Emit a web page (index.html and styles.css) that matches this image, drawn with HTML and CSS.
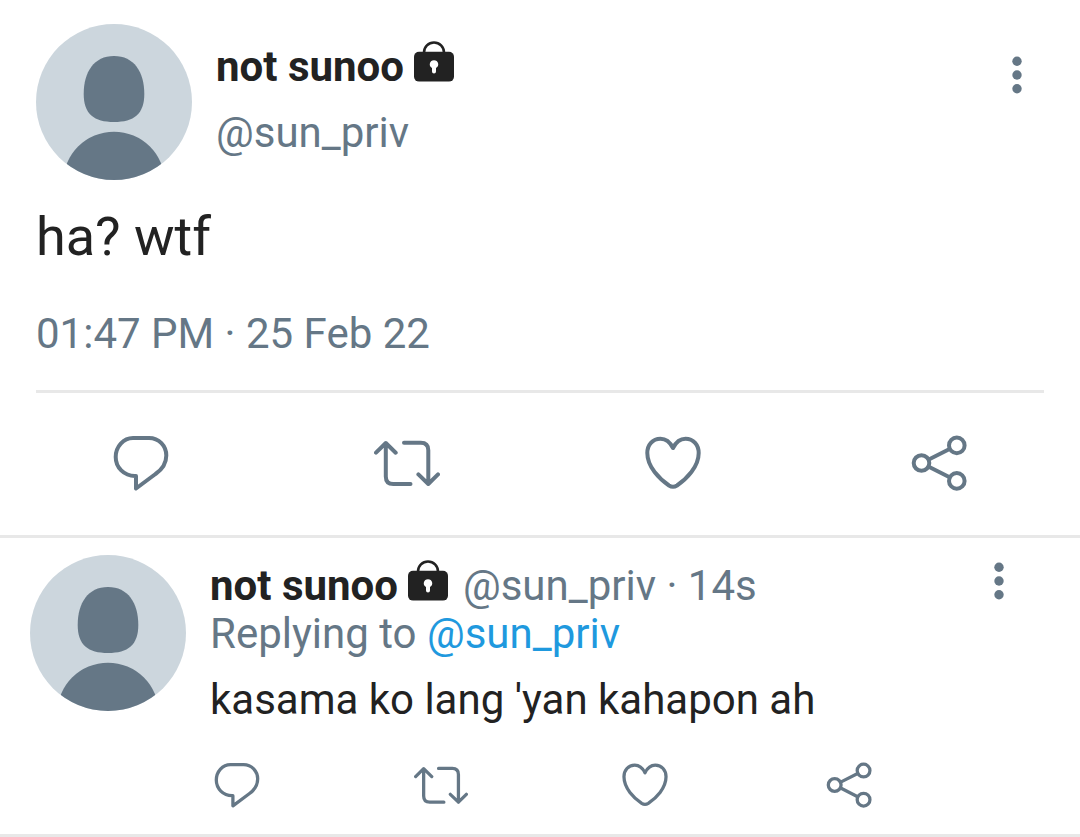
FILE: index.html
```html
<!DOCTYPE html>
<html lang="en">
<head>
  <meta charset="UTF-8" />
  <meta name="viewport" content="width=device-width, initial-scale=1" />
  <title>Tweet</title>
  <link rel="stylesheet" href="styles.css">
</head>
<body>
  <!-- Shared icons -->
  <svg class="sprite" aria-hidden="true">
    <symbol id="avatar" viewBox="0 0 156 156">
      <clipPath id="avatarClip"><circle cx="78" cy="78" r="78" /></clipPath>
      <g clip-path="url(#avatarClip)">
        <rect width="156" height="156" fill="#ccd6dd" />
        <path fill="#657786" d="M78 32C98 32 108.3 48 108.3 70C108.3 90 98 98 78 98C58 98 47.7 90 47.7 70C47.7 48 58 32 78 32Z" />
        <circle cx="78" cy="158.5" r="50.8" fill="#657786" />
      </g>
    </symbol>
    <symbol id="lock" viewBox="0 0 40 42">
      <path fill="none" stroke="#222" stroke-width="2.6" d="M10 13V11.5a10 10 0 0 1 20 0V13" />
      <rect y="10.8" width="40" height="29.8" rx="5" fill="#222" />
      <path fill="#fff" d="M20 19.2a4.2 4.2 0 0 1 2 7.9V30.5a2 2 0 0 1-4 0V27.1a4.2 4.2 0 0 1 2-7.9Z" />
    </symbol>
    <symbol id="reply" viewBox="0 0 66 66">
      <path d="M25 8H41C51 8 58.3 16 58.3 25.5C58.3 33 54 39.5 47.5 44L28 58.5V46H27C16 46 7.7 37.5 7.7 27C7.7 16.5 15.5 8 25 8Z" />
    </symbol>
    <symbol id="retweet" viewBox="0 0 66 66">
      <path d="M2 22.7L11.8 13L21.7 22.7M11.8 13V46.5Q11.8 54 19.3 54H36.5M30 12.8H46.8Q54.3 12.8 54.3 20.3V54M44.4 44.4L54.3 54L64 44.4" />
    </symbol>
    <symbol id="like" viewBox="0 0 66 66">
      <path d="M33 18C30 12 25.5 8.7 20.5 8.7C12.5 8.7 7.3 15 7.3 23C7.3 37 19.5 49 29 55.5Q33 58 37 55.5C46.5 49 58.7 37 58.7 23C58.7 15 53.5 8.7 45.5 8.7C40.5 8.7 36 12 33 18Z" />
    </symbol>
    <symbol id="share" viewBox="0 0 66 66">
      <path d="M22.8 29.5L43.6 19M22.8 36.7L43.6 47.3" />
      <circle cx="15.5" cy="33" r="7.8" />
      <circle cx="50.8" cy="15.4" r="7.8" />
      <circle cx="50.8" cy="50.9" r="7.8" />
    </symbol>
    <symbol id="more" viewBox="0 0 10 38">
      <circle cx="5" cy="5.3" r="4.7" />
      <circle cx="5" cy="19" r="4.7" />
      <circle cx="5" cy="32.7" r="4.7" />
    </symbol>
  </svg>

  <main>
    <article class="tweet">
      <header class="tweet-header">
        <svg class="avatar" role="img" aria-label="Profile picture"><use href="#avatar" /></svg>
        <div class="author">
          <div class="name-row">
            <strong class="name">not sunoo</strong>
            <svg class="lock" role="img" aria-label="Locked"><use href="#lock" /></svg>
          </div>
          <a class="handle" href="#">@sun_priv</a>
        </div>
        <button class="more" type="button" aria-label="More"><svg><use href="#more" /></svg></button>
      </header>
      <p class="tweet-text">ha? wtf</p>
      <time class="date" datetime="2022-02-25T13:47">01:47 PM · 25 Feb 22</time>
    </article>

    <div class="actions actions-main">
      <button type="button" aria-label="Reply"><svg><use href="#reply" /></svg></button>
      <button type="button" aria-label="Retweet"><svg><use href="#retweet" /></svg></button>
      <button type="button" aria-label="Like"><svg><use href="#like" /></svg></button>
      <button type="button" aria-label="Share"><svg><use href="#share" /></svg></button>
    </div>

    <article class="reply">
      <svg class="avatar" role="img" aria-label="Profile picture"><use href="#avatar" /></svg>
      <div class="reply-body">
        <div class="reply-header">
          <div class="name-row">
            <strong class="name">not sunoo</strong>
            <svg class="lock" role="img" aria-label="Locked"><use href="#lock" /></svg>
            <span class="meta"><a class="handle" href="#">@sun_priv</a> · <time>14s</time></span>
          </div>
          <button class="more" type="button" aria-label="More"><svg><use href="#more" /></svg></button>
        </div>
        <p class="replying">Replying to <a class="mention" href="#">@sun_priv</a></p>
        <p class="reply-text">kasama ko lang 'yan kahapon ah</p>
        <div class="actions actions-reply">
          <button type="button" aria-label="Reply"><svg><use href="#reply" /></svg></button>
          <button type="button" aria-label="Retweet"><svg><use href="#retweet" /></svg></button>
          <button type="button" aria-label="Like"><svg><use href="#like" /></svg></button>
          <button type="button" aria-label="Share"><svg><use href="#share" /></svg></button>
        </div>
      </div>
    </article>
  </main>
</body>
</html>
```
FILE: styles.css
```css
* {
  box-sizing: border-box;
}

body {
  margin: 0;
  background: #fff;
  color: #222;
  font-family: Roboto, sans-serif;
  font-size: 42px;
  line-height: 48px;
}

p {
  margin: 0;
}

a {
  color: inherit;
  text-decoration: none;
}

button {
  display: block;
  padding: 0;
  border: none;
  background: none;
  color: #657786;
  cursor: pointer;
}

svg {
  display: block;
  flex-shrink: 0;
}

.sprite {
  position: absolute;
  width: 0;
  height: 0;
}

.avatar {
  width: 156px;
  height: 156px;
}

.name-row {
  display: flex;
  align-items: center;
  height: 48px;
}

.name {
  font-weight: 700;
}

.lock {
  width: 40px;
  height: 42px;
  margin: 0 15px 10px 10px;
}

.handle,
.meta,
.date,
.replying {
  color: #657786;
}

.more svg {
  width: 10px;
  height: 38px;
  fill: currentColor;
}

/* Main tweet */
.tweet {
  margin: 0 36px;
  padding: 24px 0 32px;
  border-bottom: 3px solid #e8e8e8;
}

.tweet-header {
  display: flex;
  align-items: flex-start;
  gap: 24px;
}

.author {
  display: flex;
  flex: 1;
  flex-direction: column;
  gap: 18px;
  padding-top: 19px;
}

.tweet-header .more {
  margin: 32px 22px 0 0;
}

.tweet-text {
  margin-top: 24px;
  font-size: 54px;
  line-height: 66px;
}

.date {
  display: block;
  margin-top: 40px;
}

/* Action buttons */
.actions svg {
  width: 66px;
  height: 66px;
  overflow: visible;
  fill: none;
  stroke: currentColor;
  stroke-width: 4;
  stroke-linecap: round;
  stroke-linejoin: round;
}

.actions-main {
  display: grid;
  grid-template-columns: repeat(4, 1fr);
  justify-items: center;
  padding: 37px 8px 39px;
  border-bottom: 3px solid #e8e8e8;
}

.actions-reply {
  display: flex;
  justify-content: space-between;
  margin: 34px 174px 0 0;
}

.actions-reply svg {
  width: 54px;
  height: 54px;
}

/* Reply */
.reply {
  display: flex;
  gap: 24px;
  padding: 17px 30px 22px;
  border-bottom: 3px solid #e8e8e8;
}

.reply-body {
  flex: 1;
  padding-top: 7px;
}

.reply-header {
  display: flex;
  align-items: flex-start;
  justify-content: space-between;
}

.reply-header .more {
  margin-right: 46px;
}

.mention {
  color: #1f99de;
}

.reply-text {
  margin-top: 18px;
}
```
